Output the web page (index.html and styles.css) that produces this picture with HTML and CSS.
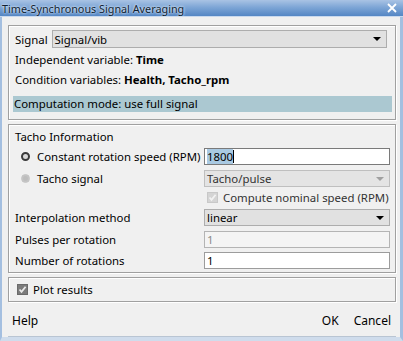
FILE: index.html
```html
<!DOCTYPE html>
<html lang="en">
<head>
    <meta charset="UTF-8">
    <title>Time-Synchronous Signal Averaging</title>
    <link rel="stylesheet" href="styles.css">
</head>
<body>
    <div class="window">
        <div class="titlebar">
            <span class="title">Time-Synchronous Signal Averaging</span>
            <svg class="close" width="10" height="10" viewBox="0 0 10 10">
                <path d="M1 1 L9 9 M9 1 L1 9" stroke="#fff" stroke-width="1.8"/>
            </svg>
        </div>

        <div class="content">
            <!-- signal selection -->
            <div class="panel panel-signal">
                <div class="signal-row">
                    <span class="label">Signal</span>
                    <div class="select">
                        <span>Signal/vib</span>
                        <span class="arrow"></span>
                    </div>
                </div>
                <div class="info">Independent variable: <b>Time</b></div>
                <div class="info">Condition variables: <b>Health, Tacho_rpm</b></div>
                <div class="mode">Computation mode: use full signal</div>
            </div>

            <!-- tacho settings -->
            <div class="panel panel-tacho">
                <div class="section-title">Tacho Information</div>
                <div class="form-grid">
                    <div class="radio-item">
                        <span class="radio checked"></span>
                        <span>Constant rotation speed (RPM)</span>
                    </div>
                    <div class="input focused"><span class="sel">1800</span><span class="caret"></span></div>

                    <div class="radio-item">
                        <span class="radio disabled"></span>
                        <span>Tacho signal</span>
                    </div>
                    <div class="select disabled">
                        <span>Tacho/pulse</span>
                        <span class="arrow"></span>
                    </div>

                    <div></div>
                    <div class="check-item disabled">
                        <svg class="checkbox" width="11" height="11" viewBox="0 0 11 11">
                            <rect x="0.5" y="0.5" width="10" height="10" fill="#d4d4d4" stroke="#c8c8c8"/>
                            <path d="M2.5 5.5 L4.5 7.8 L8.6 2.8" fill="none" stroke="#f2f2f2" stroke-width="1.8"/>
                        </svg>
                        <span>Compute nominal speed (RPM)</span>
                    </div>

                    <div class="field-label">Interpolation method</div>
                    <div class="select">
                        <span>linear</span>
                        <span class="arrow"></span>
                    </div>

                    <div class="field-label">Pulses per rotation</div>
                    <div class="input disabled">1</div>

                    <div class="field-label">Number of rotations</div>
                    <div class="input">1</div>
                </div>
            </div>

            <!-- plot option -->
            <div class="panel panel-plot">
                <div class="check-item">
                    <svg class="checkbox" width="11" height="11" viewBox="0 0 11 11">
                        <rect x="0.5" y="0.5" width="10" height="10" fill="#7b7b7b" stroke="#6a6a6a"/>
                        <path d="M2.5 5.5 L4.5 7.8 L8.6 2.8" fill="none" stroke="#e8e8e8" stroke-width="1.8"/>
                    </svg>
                    <span>Plot results</span>
                </div>
            </div>

            <div class="footer">
                <span>Help</span>
                <span class="buttons"><span>OK</span><span>Cancel</span></span>
            </div>
        </div>
    </div>
</body>
</html>
```

FILE: styles.css
```css
html, body {
    margin: 0;
    padding: 0;
}
body {
    width: 403px;
    height: 341px;
    overflow: hidden;
    font-family: "Noto Sans", "Open Sans", sans-serif;
    font-size: 11.4px;
    color: #000;
    background: #dfe8f3;
    white-space: nowrap;
}
.window {
    height: 341px;
    box-sizing: border-box;
    border-left: 2px solid #a4bfe0;
    border-right: 3px solid #a4bfe0;
    border-bottom: 4px solid #cfdcec;
    background-color: #f0f0f0;
    display: flex;
    flex-direction: column;
}
.titlebar {
    height: 16px;
    margin-left: -2px;
    margin-right: -3px;
    border-bottom: 1px solid #c9d9ee;
    background: linear-gradient(#a9c3e4, #7ea6d6 45%, #5486c4);
    display: flex;
    align-items: center;
    justify-content: space-between;
    padding: 0 6px 0 2px;
}
.title {
    font-size: 10.8px;
    color: #0e1e33;
    text-shadow: 0 0 3px #dfeaf7, 0 0 2px #dfeaf7;
}
.close {
    display: block;
}
.content {
    flex: 1;
    padding: 8px 4px 0 6px;
    display: flex;
    flex-direction: column;
}
.panel {
    box-sizing: border-box;
    border: 1px solid #a0a0a0;
    box-shadow: 1px 1px 0 #fff, inset 1px 1px 0 #fff;
    margin-bottom: 4px;
}
.panel-signal {
    height: 95px;
    padding: 4px 4px 0 5px;
}
.signal-row {
    display: flex;
    align-items: center;
    gap: 4px;
}
.label {
    padding-left: 1px;
}
.select {
    height: 17px;
    box-sizing: border-box;
    border: 1px solid #adadad;
    background: #e1e1e1;
    display: flex;
    align-items: center;
    justify-content: space-between;
    padding: 0 5px 0 2px;
}
.signal-row .select {
    flex: 1;
    height: 18px;
    margin-right: 4px;
}
.arrow {
    width: 0;
    height: 0;
    border-left: 4px solid transparent;
    border-right: 4px solid transparent;
    border-top: 4px solid #000;
}
.select.disabled {
    border-color: #bfbfbf;
    background: #e4e4e4;
    color: #333;
}
.select.disabled .arrow {
    border-top-color: #a0a0a0;
}
.info {
    margin-top: 4px;
    padding-left: 1px;
    height: 15px;
    line-height: 15px;
}
.info + .info {
    margin-top: 5px;
}
.info b {
    font-weight: bold;
}
.mode {
    margin-top: 9px;
    height: 16px;
    line-height: 16px;
    background: #abc8d1;
    margin-right: -1px;
    margin-left: -1px;
    padding-left: 1px;
}
.panel-tacho {
    height: 149px;
    padding: 4px 5px 0 6px;
}
.section-title {
    height: 15px;
    line-height: 15px;
}
.form-grid {
    margin-top: 4px;
    display: grid;
    grid-template-columns: 1fr 186px;
    grid-template-rows: 22px 21px 18px 22px 21px 17px;
    align-items: start;
}
.form-grid > * {
    height: 17px;
}
.radio-item {
    display: flex;
    align-items: center;
    gap: 7px;
    padding-left: 6px;
}
.radio {
    width: 9px;
    height: 9px;
    box-sizing: border-box;
    border-radius: 50%;
}
.radio.checked {
    border: 2.5px solid #3a3a3a;
    background: #d8d8d8;
}
.radio.disabled {
    border: 1px solid #c2c2c2;
    background: radial-gradient(#bdbdbd 40%, #d4d4d4);
}
.input {
    box-sizing: border-box;
    border: 1px solid #9c9c9c;
    background: #fff;
    padding-left: 2px;
    display: flex;
    align-items: center;
}
.input.focused {
    border-color: #7a7a7a;
}
.sel {
    background: #a9c9e2;
}
.caret {
    width: 1px;
    height: 13px;
    background: #000;
}
.input.disabled {
    background: #f4f4f4;
    border-color: #b4b4b4;
    color: #8a8a8a;
}
.check-item {
    display: flex;
    align-items: center;
    gap: 5px;
}
.form-grid > .check-item {
    height: 13px;
}
.check-item.disabled {
    color: #333;
    padding-left: 3px;
}
.checkbox {
    display: block;
    flex-shrink: 0;
}
.field-label {
    display: flex;
    align-items: center;
}
.panel-plot {
    height: 25px;
    margin-bottom: 0;
    padding-left: 8px;
    display: flex;
    align-items: center;
}
.footer {
    flex: 1;
    display: flex;
    align-items: center;
    justify-content: space-between;
    padding: 2px 5px 0 4px;
    font-size: 12px;
    border-bottom: 1px solid #b9c5d3;
}
.buttons {
    display: flex;
    gap: 15px;
}
```
